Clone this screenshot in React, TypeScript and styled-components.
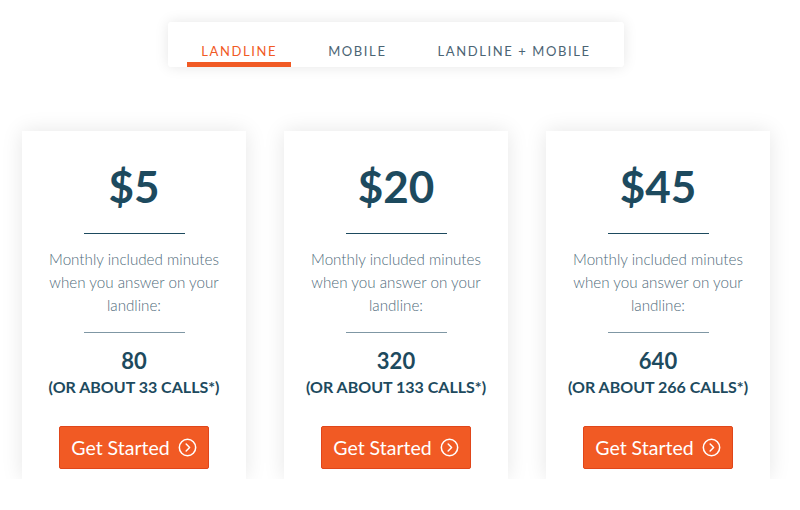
import styled, { createGlobalStyle } from "styled-components";

const Global = createGlobalStyle`
    body {
        margin: 0;
        background: #fff;
        font-family: Lato, "Open Sans", sans-serif;
    }
`
const Page = styled.div`
    width: 748px;
    padding: 22px 0 0 22px;
`
const TabBar = styled.div`
    display: flex;
    gap: 23px;
    width: fit-content;
    margin: 0 auto 64px;
    padding: 0 19px;
    background: #fff;
    border-radius: 3px;
    box-shadow: 0 0 14px rgba(0,0,0,0.1);
`
const Tab = styled.div<{ $active?: boolean }>`
    padding: 21px 14px 3px;
    font-size: 13px;
    line-height: 16px;
    letter-spacing: 1.6px;
    color: ${p => p.$active ? "#f15a24" : "#4b6474"};
    border-bottom: 5px solid ${p => p.$active ? "#f15a24" : "transparent"};
`
const Cards = styled.div`
    display: grid;
    grid-template-columns: repeat(3, 224px);
    gap: 38px;
`
const Card = styled.div`
    display: flex;
    flex-direction: column;
    align-items: center;
    padding: 33px 0 10px;
    background: #fff;
    box-shadow: 0 0 20px rgba(0,0,0,0.1);
    text-align: center;
`
const Price = styled.div`
    font-size: 44px;
    line-height: 44px;
    font-weight: 700;
    color: #1d4a5e;
`
const Rule = styled.div<{ $top: number }>`
    width: 101px;
    height: 1px;
    margin-top: ${p => p.$top}px;
    background: ${p => p.$top > 20 ? "#1d4a5e" : "#7f97a4"};
`
const Desc = styled.p`
    margin: 14px 0 0;
    font-size: 15.2px;
    line-height: 23px;
    font-weight: 300;
    color: #4f6b7b;
`
const Minutes = styled.div`
    margin-top: 14px;
    font-size: 22px;
    line-height: 28px;
    font-weight: 700;
    color: #1d4a5e;
`
const Calls = styled.div`
    font-size: 16px;
    line-height: 24px;
    font-weight: 700;
    color: #1d4a5e;
`
const Button = styled.button`
    display: flex;
    align-items: center;
    justify-content: center;
    gap: 8px;
    width: 150px;
    height: 43px;
    margin-top: 27px;
    border: 1px solid #e0461a;
    border-radius: 2px;
    background: #f15a24;
    color: #fff;
    font-family: Lato, sans-serif;
    font-size: 19.5px;
    cursor: pointer;
`

function CircleArrow() {
    return <svg width="19" height="19" viewBox="0 0 20 20" fill="none" stroke="#fff" strokeWidth="1.6" strokeLinecap="round" strokeLinejoin="round">
        <circle cx="10" cy="10" r="8.6" />
        <path d="M8.6 6.4 L12.2 10 L8.6 13.6" />
    </svg>
}

const plans = [
    { price: "$5", minutes: 80, calls: 33 },
    { price: "$20", minutes: 320, calls: 133 },
    { price: "$45", minutes: 640, calls: 266 },
]

export default function App() {
    return <Page>
        <Global />
        <TabBar>
            <Tab $active>LANDLINE</Tab>
            <Tab>MOBILE</Tab>
            <Tab>LANDLINE + MOBILE</Tab>
        </TabBar>
        <Cards>
            {plans.map(p => <Card key={p.price}>
                <Price>{p.price}</Price>
                <Rule $top={25} />
                <Desc>Monthly included minutes<br />when you answer on your<br />landline:</Desc>
                <Rule $top={15} />
                <Minutes>{p.minutes}</Minutes>
                <Calls>(OR ABOUT {p.calls} CALLS*)</Calls>
                <Button>Get Started <CircleArrow /></Button>
            </Card>)}
        </Cards>
    </Page>
}
